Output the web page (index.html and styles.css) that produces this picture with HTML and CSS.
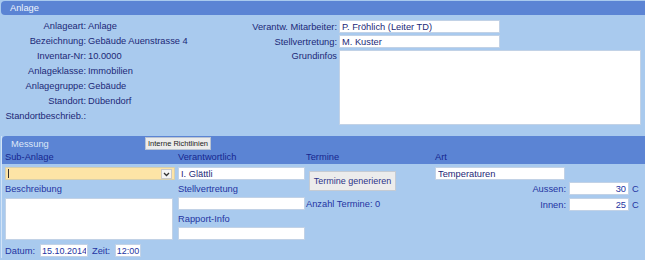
FILE: index.html
```html
<!DOCTYPE html>
<html>
<head>
  <title>Anlage</title>
  <link rel="stylesheet" href="styles.css">
</head>
<body>

  <!-- Stammdaten der Anlage -->
  <div class="anlage">
    <div class="kopf">Anlage</div>
    <div class="anlage-inhalt">
      <div class="anlage-links">
        <div class="zeile"><span class="lbl">Anlageart:</span><span class="wert">Anlage</span></div>
        <div class="zeile"><span class="lbl">Bezeichnung:</span><span class="wert">Gebäude Auenstrasse 4</span></div>
        <div class="zeile"><span class="lbl">Inventar-Nr:</span><span class="wert">10.0000</span></div>
        <div class="zeile"><span class="lbl">Anlageklasse:</span><span class="wert">Immobilien</span></div>
        <div class="zeile"><span class="lbl">Anlagegruppe:</span><span class="wert">Gebäude</span></div>
        <div class="zeile"><span class="lbl">Standort:</span><span class="wert">Dübendorf</span></div>
        <div class="zeile"><span class="lbl">Standortbeschrieb.:</span></div>
      </div>
      <div class="anlage-rechts">
        <div class="zeile-r">
          <label class="lbl-r" for="mitarbeiter">Verantw. Mitarbeiter:</label>
          <input class="feld feld-r" id="mitarbeiter" type="text" value="P. Fröhlich (Leiter TD)">
        </div>
        <div class="zeile-r">
          <label class="lbl-r" for="stellv">Stellvertretung:</label>
          <input class="feld feld-r" id="stellv" type="text" value="M. Kuster">
        </div>
        <div class="zeile-r grundinfos">
          <label class="lbl-r" for="grundinfos">Grundinfos</label>
          <textarea class="feld gross" id="grundinfos"></textarea>
        </div>
      </div>
    </div>
  </div>

  <!-- Messung -->
  <div class="messung">
    <div class="messung-kopf">
      <div class="tab-zeile">
        <span class="tab-titel">Messung</span>
        <button class="knopf-klein">Interne Richtlinien</button>
      </div>
      <div class="spalten-titel">
        <span>Sub-Anlage</span>
        <span>Verantwortlich</span>
        <span>Termine</span>
        <span>Art</span>
      </div>
    </div>

    <div class="messung-inhalt">
      <div class="spalte">
        <div class="auswahl">
          <span class="cursor"></span>
          <span class="pfeil">
            <svg width="7" height="5" viewBox="0 0 7 5"><path d="M1 1 L3.5 3.5 L6 1" fill="none" stroke="#333" stroke-width="1.3"/></svg>
          </span>
        </div>
        <div class="lbl-m">Beschreibung</div>
        <textarea class="feld beschreibung"></textarea>
        <div class="datum-zeile">
          <span>Datum:</span>
          <input class="feld feld-datum" type="text" value="15.10.2014">
          <span class="zeit">Zeit:</span>
          <input class="feld feld-zeit" type="text" value="12:00">
        </div>
      </div>

      <div class="spalte">
        <input class="feld feld-m" type="text" value="I. Glättli">
        <div class="lbl-m">Stellvertretung</div>
        <input class="feld feld-m" type="text" value="">
        <div class="lbl-m">Rapport-Info</div>
        <input class="feld feld-m" type="text" value="">
      </div>

      <div class="spalte">
        <button class="knopf">Termine generieren</button>
        <div class="anzahl">Anzahl Termine: 0</div>
      </div>

      <div class="spalte">
        <input class="feld feld-art" type="text" value="Temperaturen">
        <div class="temp-zeile">
          <span class="temp-lbl">Aussen:</span>
          <input class="feld feld-zahl" type="text" value="30">
          <span class="einheit">C</span>
        </div>
        <div class="temp-zeile">
          <span class="temp-lbl">Innen:</span>
          <input class="feld feld-zahl" type="text" value="25">
          <span class="einheit">C</span>
        </div>
      </div>
    </div>
  </div>

</body>
</html>
```

FILE: styles.css
```css
* {
  box-sizing: border-box;
}

body {
  margin: 0;
  background-color: #a9caee;
  font-family: "Liberation Sans", Arial, sans-serif;
  font-size: 9.3px;
  color: #1c2877;
}

input, textarea, button {
  font: inherit;
  color: inherit;
  margin: 0;
}

.feld {
  height: 13px;
  padding: 0 2px;
  border: 1px solid #c2d2e6;
  background-color: #fff;
  outline: none;
}

/* Kopfzeilen */
.kopf {
  margin: 1px 0 0 1px;
  height: 14px;
  line-height: 14px;
  padding-left: 9px;
  background-color: #5b84d4;
  color: #eef3fc;
  border-radius: 4px 0 0 4px;
}

/* Anlage */
.anlage-inhalt {
  display: flex;
  padding-top: 4px;
}

.anlage-links {
  width: 200px;
}

.zeile {
  display: flex;
  height: 15px;
  line-height: 15px;
  white-space: nowrap;
}

.lbl {
  width: 86px;
  text-align: right;
}

.wert {
  margin-left: 2px;
}

.anlage-rechts {
  flex: 1;
}

.zeile-r {
  display: flex;
  align-items: center;
  height: 15px;
}

.lbl-r {
  width: 137px;
  margin-right: 2px;
  text-align: right;
  white-space: nowrap;
}

.feld-r {
  width: 161px;
}

.grundinfos {
  align-items: flex-start;
  height: auto;
}

.grundinfos .lbl-r {
  line-height: 15px;
}

.gross {
  width: 302px;
  height: 75px;
  margin-top: 1px;
  resize: none;
}

/* Messung */
.messung {
  margin: 11px 0 0 1px;
  border-left: 1px solid #d3e4f7;
}

.messung-kopf {
  background-color: #5b84d4;
  border-radius: 4px 0 0 0;
  height: 28px;
}

.tab-zeile {
  display: flex;
  align-items: center;
  height: 15px;
  padding-left: 9px;
}

.tab-titel {
  width: 134px;
  color: #dde7f8;
}

.knopf-klein {
  height: 13px;
  padding: 0 2px;
  font-size: 7.5px;
  color: #222;
  background-color: #ececec;
  border: 1px solid #b9c3d2;
}

.spalten-titel {
  display: grid;
  grid-template-columns: 173px 128px 129px 1fr;
  padding-left: 3px;
  height: 13px;
  line-height: 13px;
  color: #16268f;
}

.messung-inhalt {
  display: grid;
  grid-template-columns: 173px 128px 129px 1fr;
  padding: 3px 0 0 3px;
}

.spalte {
  display: flex;
  flex-direction: column;
  align-items: flex-start;
}

.auswahl {
  display: flex;
  align-items: center;
  width: 170px;
  height: 13px;
  background-color: #fde4a6;
  border: 1px solid #d6cfae;
  position: relative;
}

.cursor {
  width: 1px;
  height: 9px;
  margin-left: 2px;
  background-color: #333;
}

.pfeil {
  position: absolute;
  right: 2px;
  top: 1px;
  width: 11px;
  height: 10px;
  display: flex;
  align-items: center;
  justify-content: center;
  background-color: #f4f4f4;
  border: 1px solid #c9c9c9;
}

.lbl-m {
  height: 15px;
  line-height: 15px;
  margin-top: 2px;
  color: #2434a2;
}

.beschreibung {
  width: 168px;
  height: 42px;
  margin-top: 1px;
  resize: none;
}

.datum-zeile {
  display: flex;
  align-items: center;
  height: 15px;
  margin-top: 3px;
  color: #2434a2;
}

.feld-datum {
  width: 48px;
  margin-left: 5px;
  padding: 0 1px;
  font-size: 9px;
}

.zeit {
  margin-left: 4px;
}

.feld-zeit {
  width: 26px;
  margin-left: 5px;
  padding: 0;
  font-size: 9px;
  text-align: center;
}

.feld-m {
  width: 127px;
}

.knopf {
  width: 87px;
  height: 20px;
  margin: 4px 0 0 3px;
  padding: 0;
  font-size: 9px;
  color: #2c3488;
  background-color: #ececec;
  border: 1px solid #c5cbd3;
}

.anzahl {
  margin-top: 6px;
  line-height: 14px;
  color: #2434a2;
}

.feld-art {
  width: 130px;
}

.temp-zeile {
  display: flex;
  align-items: center;
  margin-top: 2px;
  color: #2434a2;
}

.temp-zeile + .temp-zeile {
  margin-top: 3px;
}

.temp-lbl {
  width: 131px;
  text-align: right;
}

.feld-zahl {
  width: 60px;
  margin-left: 3px;
  text-align: right;
}

.einheit {
  margin-left: 3px;
}
```
